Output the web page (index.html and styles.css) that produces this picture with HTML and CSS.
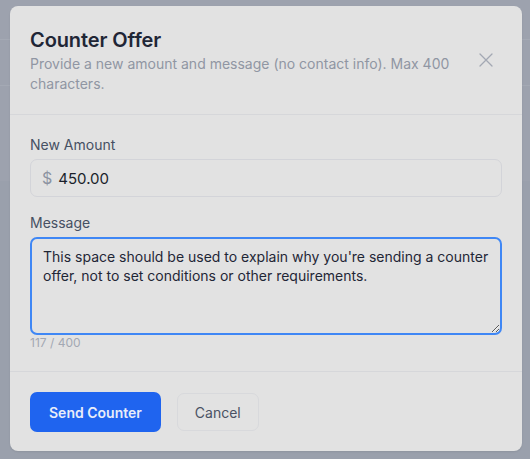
FILE: index.html
```html
<!DOCTYPE html>
<html lang="en">
<head>
<meta charset="utf-8">
<title>Counter Offer</title>
<link rel="stylesheet" href="styles.css">
</head>
<body>
<div class="backdrop">
  <div class="bg-top">
    <div class="bg-row"></div>
    <div class="bg-row"></div>
  </div>
</div>
<div class="overlay">
  <div class="modal">
    <div class="modal-header">
      <div class="header-text">
        <h2 class="title">Counter Offer</h2>
        <p class="subtitle">Provide a new amount and message (no contact info). Max 400 characters.</p>
      </div>
      <button class="close" aria-label="Close">
        <svg width="16" height="16" viewBox="0 0 16 16" fill="none" stroke="currentColor" stroke-width="1.3" stroke-linecap="round"><path d="M2 2L14 14M14 2L2 14"/></svg>
      </button>
    </div>
    <div class="modal-body">
      <div class="field">
        <label class="label">New Amount</label>
        <div class="amount-input">
          <span class="currency">$</span>
          <span class="amount-value">450.00</span>
        </div>
      </div>
      <div class="field">
        <label class="label">Message</label>
        <textarea class="message" rows="4" autofocus>This space should be used to explain why you're sending a counter offer, not to set conditions or other requirements.</textarea>
        <div class="count">117 / 400</div>
      </div>
    </div>
    <div class="modal-footer">
      <button class="btn btn-primary">Send Counter</button>
      <button class="btn btn-secondary">Cancel</button>
    </div>
  </div>
</div>
</body>
</html>
```

FILE: styles.css
```css
* { box-sizing: border-box; }
html, body { margin: 0; padding: 0; }
body {
  width: 530px;
  height: 459px;
  overflow: hidden;
  background: #9aa0ac;
  font-family: Inter, "Noto Sans", sans-serif;
  position: relative;
}
.backdrop { height: 459px; }
.bg-top {
  height: 181px;
  background: #9da2ae;
  padding-top: 39px;
}
.bg-row {
  height: 46px;
  border-top: 1px solid #a4a9b4;
}
.overlay {
  position: absolute;
  inset: 0;
  padding: 6px 8px 8px 10px;
}
.modal {
  width: 512px;
  height: 445px;
  background: #e2e2e2;
  border-radius: 8px;
  display: flex;
  flex-direction: column;
  box-shadow: 0 1px 2px rgba(0,0,0,0.08);
}
.modal-header {
  display: flex;
  align-items: center;
  gap: 16px;
  padding: 20px 20px 20px 20px;
  border-bottom: 1px solid #d6d7da;
}
.header-text { flex: 1; min-width: 0; }
.title {
  margin: 0;
  font-size: 20px;
  line-height: 28px;
  font-weight: 600;
  color: #1f2636;
  letter-spacing: -0.1px;
}
.subtitle {
  margin: 0;
  font-size: 14px;
  line-height: 20px;
  color: #9096a3;
}
.close {
  width: 32px;
  height: 32px;
  border: none;
  background: transparent;
  color: #a3a8b3;
  display: flex;
  align-items: center;
  justify-content: center;
  padding: 0;
}
.modal-body {
  padding: 20px 20px 20px 20px;
  border-bottom: 1px solid #d6d7da;
}
.field { display: flex; flex-direction: column; }
.field + .field { margin-top: 16px; }
.label {
  font-size: 14px;
  line-height: 20px;
  color: #465063;
  margin-bottom: 4px;
}
.amount-input {
  height: 38px;
  border: 1px solid #d3d4d9;
  border-radius: 7px;
  display: flex;
  align-items: center;
  padding: 0 11px;
  gap: 6px;
}
.currency {
  font-size: 16px;
  color: #8c93a1;
}
.amount-value {
  font-size: 15px;
  color: #1a1f2b;
}
.message {
  display: block;
  width: 100%;
  height: 98px;
  resize: vertical;
  font-family: Inter, "Noto Sans", sans-serif;
  font-size: 14px;
  line-height: 19px;
  color: #1f2636;
  background: #e2e2e2;
  border: 2px solid #3f87f5;
  border-radius: 7px;
  padding: 8px 11px;
  outline: none;
}
.count {
  font-size: 12px;
  line-height: 16px;
  color: #a3a8b3;
}
.modal-footer {
  display: flex;
  align-items: center;
  gap: 16px;
  padding: 20px;
}
.btn {
  font-family: Inter, "Noto Sans", sans-serif;
  font-size: 14px;
  border-radius: 7px;
}
.btn-primary {
  height: 40px;
  padding: 0 19px;
  background: #1f64ef;
  color: #e8edf9;
  font-weight: 600;
  border: none;
}
.btn-secondary {
  height: 38px;
  padding: 0 17px;
  background: transparent;
  color: #4a5263;
  border: 1px solid #d8d9dc;
}
```
